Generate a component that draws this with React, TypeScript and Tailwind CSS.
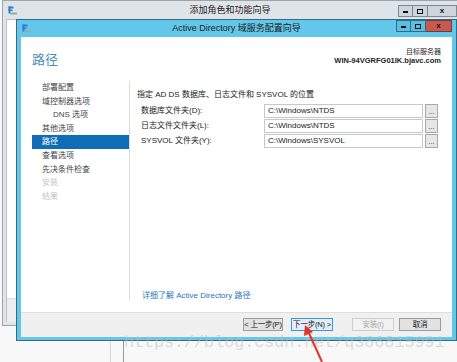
import React from "react";

const F = "font-['Liberation_Sans','Noto_Sans_CJK_SC',sans-serif]";

function AppIcon() {
  return (
    <svg width="9" height="9" viewBox="0 0 9 9">
      <rect x="0.5" y="0.5" width="2" height="7" fill="#2f7fd0" />
      <rect x="0.5" y="0.5" width="5" height="2" fill="#2f7fd0" />
      <rect x="0.5" y="3.5" width="4" height="1.5" fill="#2f7fd0" />
      <rect x="2" y="6.5" width="7" height="2" fill="#9aa7b2" />
    </svg>
  );
}

function CapButtons({ front }: { front?: boolean }) {
  const base = front
    ? "bg-[#5bbfe2] border-[#2f6e88]"
    : "bg-[#cfd5da] border-[#7d8a94]";
  return (
    <div className="flex h-[12px]">
      <div className={`w-[15px] h-full border flex items-end justify-center pb-[3px] ${base}`}>
        <div className="w-[5px] h-[2px] bg-[#111]" />
      </div>
      <div className={`w-[15px] h-full border border-l-0 flex items-center justify-center ${base}`}>
        <div className="w-[6px] h-[5px] border-[1.5px] border-[#111]" />
      </div>
      <div
        className={`${front ? "w-[26px] bg-[#c75a50] border-[#7a3a34]" : "w-[29px] " + base} h-full border border-l-0 flex items-center justify-center text-[8px] font-bold text-[#111] leading-none ${F}`}
      >
        x
      </div>
    </div>
  );
}

function NavItem({ label, active, disabled, indent }: { label: string; active?: boolean; disabled?: boolean; indent?: boolean }) {
  return (
    <div
      className={`h-[13.6px] leading-[13.6px] text-[8px] ${indent ? "pl-[21px]" : "pl-[10px]"} ${
        active ? "bg-[#0f6db8] text-white" : disabled ? "text-[#c4c4c4]" : "text-[#444]"
      }`}
    >
      {label}
    </div>
  );
}

function PathRow({ label, value }: { label: string; value: string }) {
  return (
    <div className="flex items-center h-[14px]">
      <div className="w-[123px] text-[8px] text-[#222] leading-none whitespace-nowrap">{label}</div>
      <div className="w-[159px] h-[14px] border border-[#c5c8cc] bg-white flex items-center pl-[3px] text-[8px] text-[#222] leading-none">
        {value}
      </div>
      <div className="ml-[2px] w-[13px] h-[14px] border border-[#a8a8a8] bg-[#e6e6e6] flex items-end justify-center pb-[2px] text-[7px] leading-none text-[#222]">
        ...
      </div>
    </div>
  );
}

function Btn({ label, w, variant, ml }: { label: string; w: string; variant: "normal" | "primary" | "disabled"; ml: string }) {
  const v =
    variant === "primary"
      ? "bg-[#e3eefa] border-[#3a96dc] text-[#111]"
      : variant === "disabled"
      ? "bg-[#f2f2f2] border-[#cdcdcd] text-[#a5a5a5]"
      : "bg-[#e2e2e2] border-[#9c9c9c] text-[#111]";
  return (
    <div className={`${w} ${ml} h-[13px] border ${v} flex items-center justify-center text-[7.5px] leading-none whitespace-nowrap tracking-[-0.2px]`}>
      {label}
    </div>
  );
}

export default function App() {
  return (
    <div className={`relative w-[457px] h-[362px] overflow-hidden bg-[#f8f8f8] ${F}`}>
      {/* background lines below windows */}
      <div className="absolute left-[110px] top-[330px] w-px h-[40px] bg-[#d8d8d8]" />
      <div className="absolute left-[123px] top-[330px] w-px h-[40px] bg-[#9a9a9a]" />

      {/* back window */}
      <div className="absolute left-[2px] top-0 w-[456px] h-[326px] bg-[#dfe4e8] border border-[#9aa6ae] flex flex-col">
        <div className="h-[18px] grid grid-cols-[1fr_auto_1fr] items-center">
          <div className="pl-[5px] flex items-center">
            <AppIcon />
          </div>
          <div className="text-[9px] text-[#222] leading-none">添加角色和功能向导</div>
          <div className="flex justify-end items-start h-full pt-[4px]">
            <CapButtons />
          </div>
        </div>
        <div className="flex-1 ml-[3px] mb-[3px] border-l border-t border-[#b8c0c6] bg-white flex flex-col">
          <div className="flex-1" />
          <div className="h-[24px] bg-[#eeeeee] border-t border-[#e0e0e0]" />
        </div>
      </div>

      {/* front window */}
      <div className="absolute left-[16px] top-[19px] w-[441px] h-[322px] bg-[#62c7ea] border border-[#3b6a80] flex flex-col px-[4px] pb-[3px]">
        <div className="h-[17px] grid grid-cols-[1fr_auto_1fr] items-center">
          <div className="pl-[1px] flex items-center">
            <AppIcon />
          </div>
          <div className="text-[9px] text-[#1b1b1b] leading-none">Active Directory 域服务配置向导</div>
          <div className="flex justify-end items-start h-full pt-0">
            <CapButtons front />
          </div>
        </div>
        <div className="flex-1 bg-white flex flex-col">
          {/* header */}
          <div className="h-[44px] flex justify-between px-[11px] pt-[10px]">
            <div className="text-[13px] leading-[18px] mt-[4px] text-[#4c8dbb]">路径</div>
            <div className="flex flex-col items-end text-[#1e1e1e]">
              <div className="text-[7px] leading-[9px]">目标服务器</div>
              <div className="text-[7.5px] leading-[10px] font-bold">WIN-94VGRFG01IK.bjavc.com</div>
            </div>
          </div>
          {/* body */}
          <div className="flex-1 flex pb-[11px]">
            <div className="w-[109px] pl-[11px] border-r border-[#dcdcdc]">
              <NavItem label="部署配置" />
              <NavItem label="域控制器选项" />
              <NavItem label="DNS 选项" indent />
              <NavItem label="其他选项" />
              <NavItem label="路径" active />
              <NavItem label="查看选项" />
              <NavItem label="先决条件检查" />
              <NavItem label="安装" disabled />
              <NavItem label="结果" disabled />
            </div>
            <div className="flex-1 flex flex-col pl-[7px] pt-[9px]">
              <div className="text-[8px] leading-[10px] text-[#222]">指定 AD DS 数据库、日志文件和 SYSVOL 的位置</div>
              <div className="mt-[4px] pl-[4px] flex flex-col gap-[1px]">
                <PathRow label="数据库文件夹(D):" value="C:\Windows\NTDS" />
                <PathRow label="日志文件文件夹(L):" value="C:\Windows\NTDS" />
                <PathRow label="SYSVOL 文件夹(Y):" value="C:\Windows\SYSVOL" />
              </div>
              <div className="mt-auto pl-[5px] text-[8px] leading-[10px] text-[#2a74c0]">详细了解 Active Directory 路径</div>
            </div>
          </div>
          {/* footer */}
          <div className="h-[25px] bg-[#f0f0f0] border-t border-[#dedede] flex justify-end items-start pt-[5px] pr-[11px]">
            <Btn label="< 上一步(P)" w="w-[40px]" variant="normal" ml="ml-0" />
            <Btn label="下一步(N) >" w="w-[42px]" variant="primary" ml="ml-[8px]" />
            <Btn label="安装(I)" w="w-[42px]" variant="disabled" ml="ml-[19px]" />
            <Btn label="取消" w="w-[42px]" variant="normal" ml="ml-[5px]" />
          </div>
        </div>
      </div>

      {/* watermark */}
      <div className="absolute left-[124px] top-[333px] text-[16.7px] leading-[20px] font-['Liberation_Mono',monospace] text-[#bdbdbd]/50 whitespace-nowrap">
        https://blog.csdn.net/q386815991
      </div>

      {/* red arrow */}
      <svg className="absolute left-0 top-0" width="457" height="362" viewBox="0 0 457 362">
        <line x1="322" y1="362" x2="308" y2="331" stroke="#e5322b" strokeWidth="2" />
        <polygon points="305,325 304,336 313,332" fill="#e5322b" />
      </svg>
    </div>
  );
}
